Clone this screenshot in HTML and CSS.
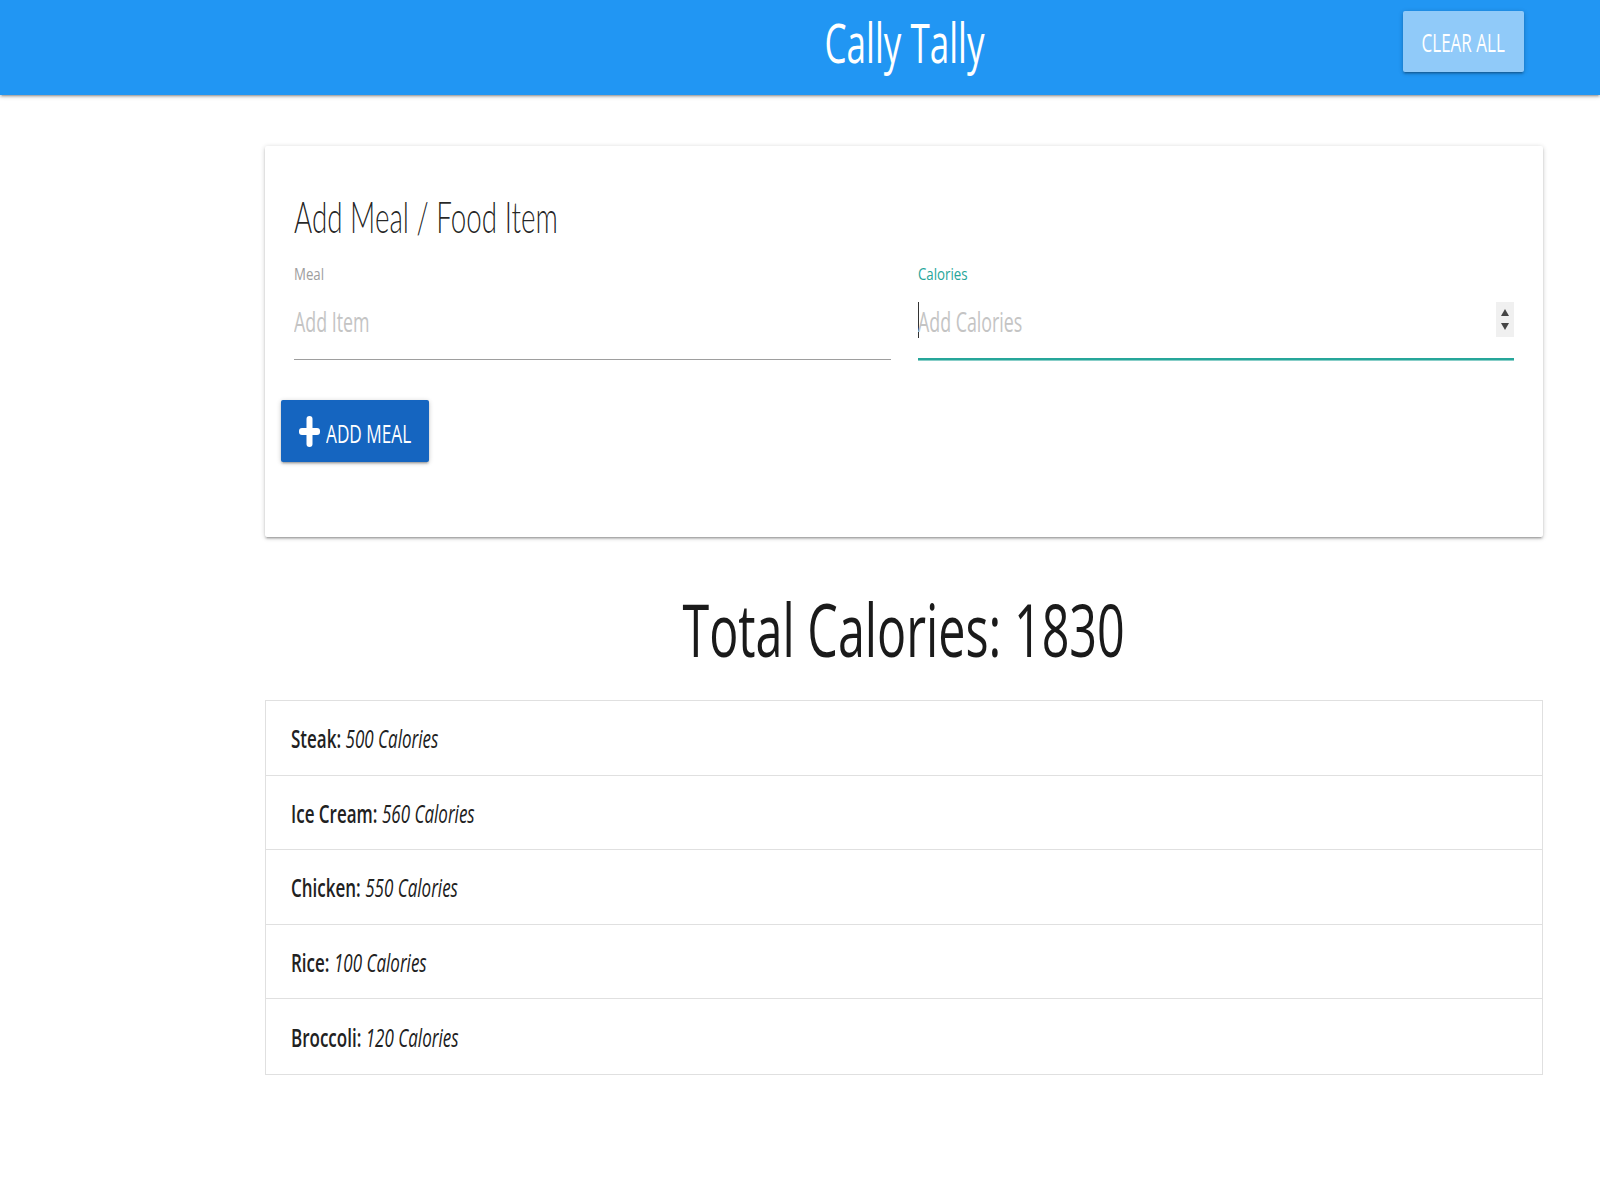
FILE: index.html
```html
<!DOCTYPE html>
<html lang="en">
<head>
<meta charset="utf-8">
<title>Cally Tally</title>
<link rel="stylesheet" href="styles.css">
</head>
<body>
<header class="nav">
  <div class="nav-inner">
    <div class="nav-spacer"></div>
    <div class="brand"><span class="sq sq-c sx-brand">Cally Tally</span></div>
    <button class="btn-clear"><span class="sq sq-c sx-clear">CLEAR ALL</span></button>
  </div>
</header>
<main class="main">
  <section class="card">
    <h4 class="card-title"><span class="sq sx-title">Add Meal / Food Item</span></h4>
    <div class="fields">
      <div class="field">
        <label class="label"><span class="sq sx-label">Meal</span></label>
        <div class="input">
          <span class="ph"><span class="sq sx-ph">Add Item</span></span>
        </div>
      </div>
      <div class="field">
        <label class="label label-active"><span class="sq sx-label">Calories</span></label>
        <div class="input input-active">
          <span class="caret"></span>
          <span class="ph"><span class="sq sx-ph">Add Calories</span></span>
          <span class="spinner">
            <span class="tri tri-up"></span>
            <span class="tri tri-down"></span>
          </span>
        </div>
      </div>
    </div>
    <button class="btn-add">
      <svg class="plus" width="21" height="31" viewBox="0 0 21 31" aria-hidden="true">
        <rect x="7.5" y="0" width="6" height="31" rx="3" fill="#fff"/>
        <rect x="0" y="12" width="21" height="7" rx="3" fill="#fff"/>
      </svg>
      <span class="sq sx-add add-text">ADD MEAL</span>
    </button>
  </section>

  <h1 class="total"><span class="sq sq-c sx-total">Total Calories: 1830</span></h1>

  <ul class="list">
    <li class="item"><span class="sq sx-item"><strong>Steak:</strong> <em>500 Calories</em></span></li>
    <li class="item"><span class="sq sx-item"><strong>Ice Cream:</strong> <em>560 Calories</em></span></li>
    <li class="item"><span class="sq sx-item"><strong>Chicken:</strong> <em>550 Calories</em></span></li>
    <li class="item"><span class="sq sx-item"><strong>Rice:</strong> <em>100 Calories</em></span></li>
    <li class="item"><span class="sq sx-item"><strong>Broccoli:</strong> <em>120 Calories</em></span></li>
  </ul>
</main>
</body>
</html>
```
FILE: styles.css
```css
* { box-sizing: border-box; }

html, body {
  margin: 0;
  padding: 0;
  background: #ffffff;
}

body {
  font-family: "Open Sans", "Noto Sans", "Liberation Sans", sans-serif;
  color: #212121;
}

/* horizontally condensed text, as in the reference */
.sq {
  display: inline-block;
  white-space: nowrap;
  transform-origin: left center;
  transform: scaleX(var(--sx, 1));
}
.sq-c { transform-origin: center center; }

.sx-brand { --sx: 0.637; }
.sx-clear { --sx: 0.68; }
.sx-title { --sx: 0.632; }
.sx-label { --sx: 0.78; }
.sx-ph    { --sx: 0.66; }
.sx-add   { --sx: 0.688; }
.sx-total { --sx: 0.655; }
.sx-item  { --sx: 0.68; }

/* ---------- header ---------- */
.nav {
  height: 95px;
  background: #2196f3;
  padding: 11px 57px 0 265px;
  box-shadow: 0 2px 2px 0 rgba(0,0,0,0.14), 0 3px 1px -2px rgba(0,0,0,0.12), 0 1px 5px 0 rgba(0,0,0,0.2);
  position: relative;
  z-index: 2;
}

.nav-inner {
  display: grid;
  grid-template-columns: 1fr auto 1fr;
  align-items: center;
  height: 61px;
}

.brand {
  color: #ffffff;
  font-size: 55px;
  line-height: 1;
  font-weight: 400;
  text-align: center;
}

.btn-clear {
  justify-self: end;
  margin-right: 19px;
  width: 121px;
  height: 61px;
  border: none;
  border-radius: 2px;
  background: #90caf9;
  color: #ffffff;
  font-family: inherit;
  font-size: 25px;
  line-height: 1;
  padding: 2px 0 0;
  display: flex;
  align-items: center;
  justify-content: center;
  box-shadow: 0 2px 2px 0 rgba(0,0,0,0.14), 0 3px 1px -2px rgba(0,0,0,0.12), 0 1px 5px 0 rgba(0,0,0,0.2);
}

/* ---------- main ---------- */
.main {
  padding: 51px 57px 0 265px;
}

.card {
  background: #ffffff;
  border-radius: 2px;
  padding: 47px 29px 75px 16px;
  box-shadow: 0 2px 2px 0 rgba(0,0,0,0.14), 0 3px 1px -2px rgba(0,0,0,0.12), 0 1px 5px 0 rgba(0,0,0,0.2);
}

.card-title {
  margin: 0 0 28px 13px;
  padding-top: 1px;
  height: 44px;
  font-family: "Lato", "Open Sans", "Liberation Sans", sans-serif;
  font-size: 44px;
  line-height: 1;
  font-weight: 300;
  color: rgba(0,0,0,0.87);
}

.fields {
  display: grid;
  grid-template-columns: 1fr 1fr;
  column-gap: 27px;
  margin-left: 13px;
}

.field {
  display: flex;
  flex-direction: column;
}

.label {
  font-size: 17px;
  line-height: 1;
  height: 17px;
  color: #9e9e9e;
}
.label-active { color: #26a69a; }

.input {
  margin-top: 18px;
  height: 60px;
  padding-top: 8px;
  border-bottom: 1px solid #9e9e9e;
  display: flex;
  align-items: flex-start;
  position: relative;
}

.input-active {
  border-bottom: 2px solid #26a69a;
  box-shadow: 0 1px 0 0 rgba(38,166,154,0.55);
}

.ph {
  font-size: 27px;
  line-height: 1;
  color: #c4c4c4;
  flex: 1;
  overflow: visible;
}

.caret {
  position: absolute;
  left: 0;
  top: 2px;
  width: 1px;
  height: 36px;
  background: #333333;
}

.spinner {
  margin-top: -6px;
  width: 18px;
  height: 35px;
  background: #f0f0f0;
  display: flex;
  flex-direction: column;
  align-items: center;
  justify-content: center;
  gap: 7px;
}

.tri {
  width: 0;
  height: 0;
  border-left: 4.5px solid transparent;
  border-right: 4.5px solid transparent;
}
.tri-up { border-bottom: 7px solid #454545; }
.tri-down { border-top: 7px solid #454545; }

.btn-add {
  margin-top: 40px;
  width: 148px;
  height: 62px;
  border: none;
  border-radius: 2px;
  background: #1565c0;
  color: #ffffff;
  font-family: inherit;
  font-size: 25px;
  line-height: 1;
  padding: 0 0 0 18px;
  display: flex;
  align-items: center;
  gap: 6px;
  box-shadow: 0 2px 2px 0 rgba(0,0,0,0.14), 0 3px 1px -2px rgba(0,0,0,0.12), 0 1px 5px 0 rgba(0,0,0,0.2);
  overflow: visible;
}

.plus { flex: none; display: block; }
.add-text { padding-top: 4px; }

/* ---------- total ---------- */
.total {
  margin: 55px 0 34px;
  font-size: 74px;
  line-height: 1;
  font-weight: 400;
  color: #1a1a1a;
  text-align: center;
}

/* ---------- list ---------- */
.list {
  list-style: none;
  margin: 0 0 40px;
  padding: 0;
  border: 1px solid #e0e0e0;
}

.item {
  height: 74.6px;
  padding: 2px 25px 0;
  display: flex;
  align-items: center;
  font-size: 25px;
  line-height: 1;
  color: #212121;
  border-bottom: 1px solid #e0e0e0;
}
.item:last-child { border-bottom: none; }

.item strong { font-weight: 600; }
.item em { font-style: italic; font-weight: 400; }
```
